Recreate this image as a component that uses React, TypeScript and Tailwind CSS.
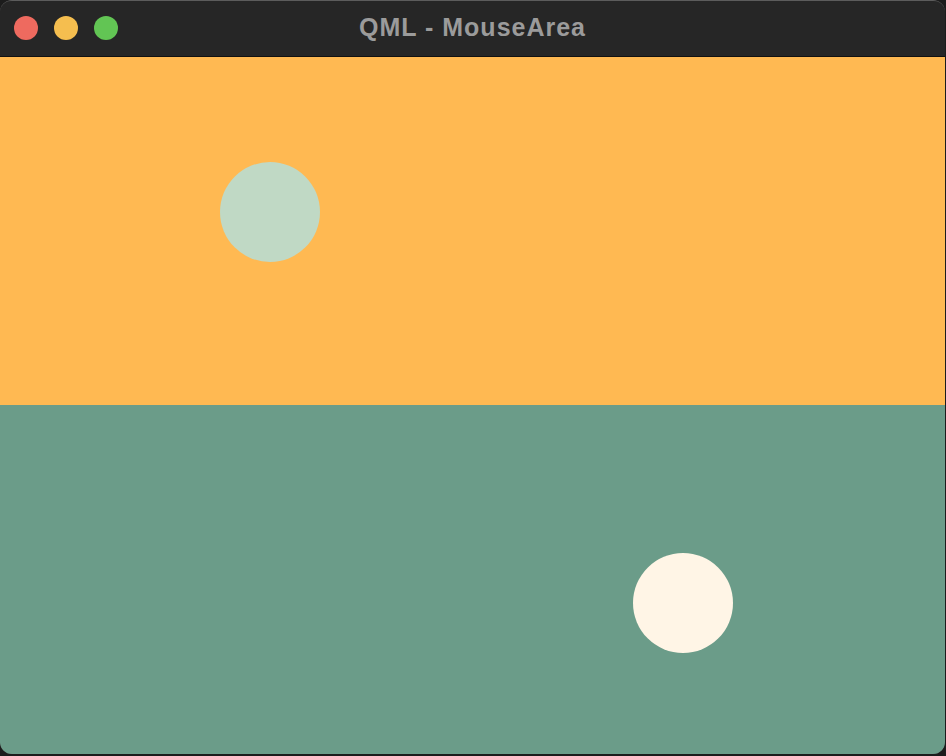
export default function App() {
  return (
    <div className="w-[946px] h-[756px] bg-[#1c1c1c] overflow-hidden">
      <div className="w-[945px] h-[754px] rounded-[12px] overflow-hidden flex flex-col border-t border-[#5c5c5c] shadow-[inset_0_0_0_1px_#444]">
        <div className="h-[56px] shrink-0 bg-[#262626] border-b border-[#111] relative flex items-center justify-center">
          <div className="absolute left-[14px] top-[15px] flex gap-[16px]">
            <span className="w-[24px] h-[24px] rounded-full bg-[#ee6a5f]" />
            <span className="w-[24px] h-[24px] rounded-full bg-[#f5be4f]" />
            <span className="w-[24px] h-[24px] rounded-full bg-[#62c554]" />
          </div>
          <span className="font-['Liberation_Sans',Arial,sans-serif] font-bold text-[25px] tracking-[1px] text-[#9b9b9b] -mt-[2px]">
            QML - MouseArea
          </span>
        </div>
        <div className="h-[348px] shrink-0 bg-[#ffb952] relative">
          <div className="absolute left-[220px] top-[105px] w-[100px] h-[100px] rounded-full bg-[#c0d9c5]" />
        </div>
        <div className="flex-1 bg-[#6b9c89] relative">
          <div className="absolute left-[633px] top-[148px] w-[100px] h-[100px] rounded-full bg-[#fff5e6]" />
        </div>
      </div>
    </div>
  );
}
